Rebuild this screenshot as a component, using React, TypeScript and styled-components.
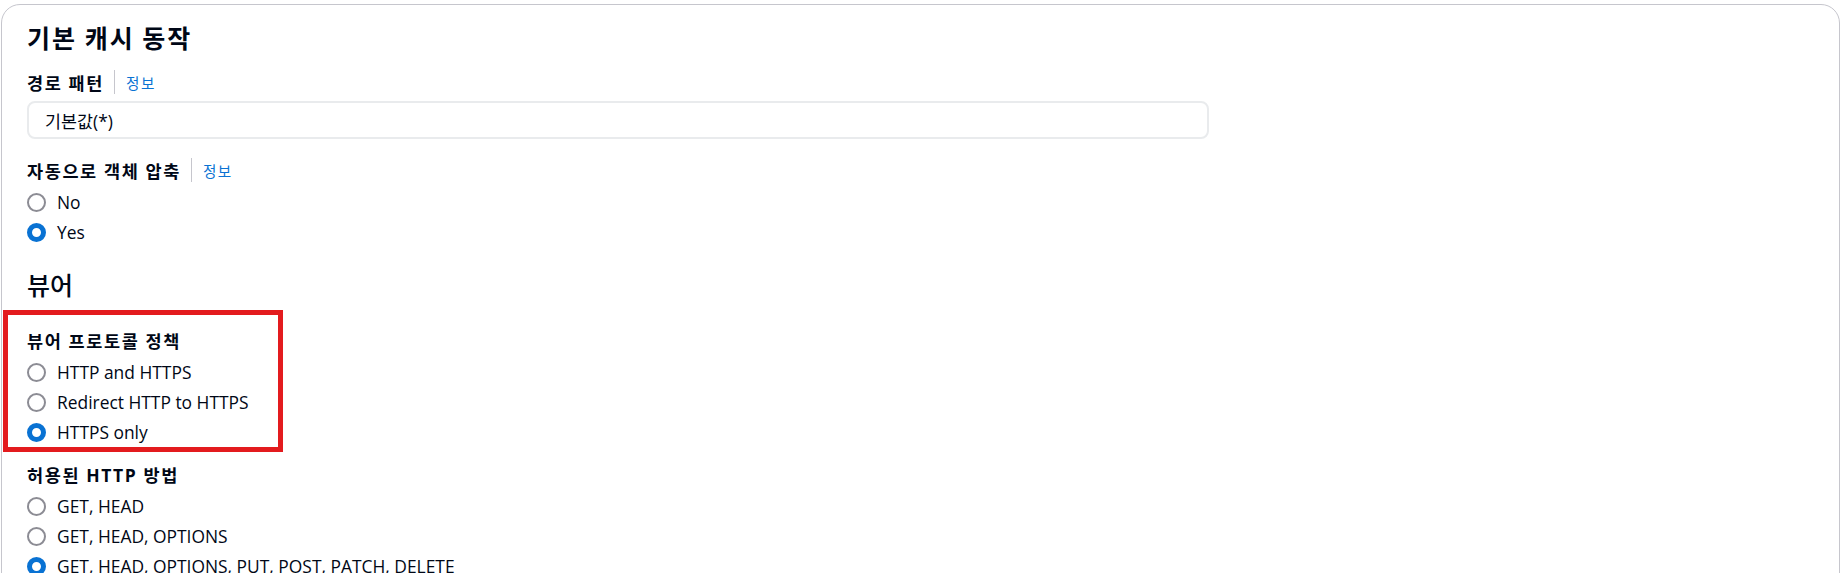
import React from "react";
import styled, { createGlobalStyle } from "styled-components";

const GlobalStyle = createGlobalStyle`
  html, body { margin: 0; padding: 0; background: #ffffff; }
  body {
    padding: 4px 5px 0 1px;
    font-family: "Open Sans", "Noto Sans CJK KR", sans-serif;
    color: #000716;
    overflow: hidden;
  }
  *, *::before, *::after { box-sizing: border-box; }
`;

const Card = styled.section`
  border: 1px solid #c6c6cd;
  border-radius: 19px;
  padding: 17px 24px 60px 25px;
  min-height: 640px;
  display: flex;
  flex-direction: column;
`;

const Title = styled.h2<{ $weight?: number; $mt?: number; $spacing?: number }>`
  margin: ${(p) => p.$mt ?? 0}px 0 0 0;
  font-family: "Noto Sans CJK KR", "Open Sans", sans-serif;
  font-size: 25px;
  line-height: 30px;
  font-weight: ${(p) => p.$weight ?? 700};
  letter-spacing: ${(p) => p.$spacing ?? 0}px;
`;

const Field = styled.div<{ $mt: number; $highlight?: boolean }>`
  position: relative;
  margin-top: ${(p) => p.$mt}px;
  display: flex;
  flex-direction: column;
  &::after {
    content: "";
    display: ${(p) => (p.$highlight ? "block" : "none")};
    position: absolute;
    top: -17px;
    left: -24px;
    width: 280px;
    height: 142px;
    border: 5px solid #e31b1e;
    pointer-events: none;
  }
`;

const LabelRow = styled.div`
  display: flex;
  align-items: center;
  height: 26px;
`;

const LabelText = styled.span`
  font-family: "Open Sans", "Noto Sans CJK KR", sans-serif;
  font-size: 17.5px;
  font-weight: 700;
  letter-spacing: 1.6px;
`;

const Divider = styled.span`
  width: 1px;
  height: 24px;
  background: #c6c6cd;
  margin: 0 11px 0 10px;
`;

const InfoLink = styled.a`
  font-family: "Noto Sans CJK KR", sans-serif;
  font-size: 14.6px;
  letter-spacing: 1.5px;
  color: #0972d3;
  text-decoration: none;
  cursor: pointer;
`;

const Input = styled.input`
  margin-top: 6px;
  width: 1182px;
  height: 38px;
  border: 2px solid #e9ebed;
  border-radius: 8px;
  padding: 0 16px;
  font-family: "Open Sans", "Noto Sans CJK KR", sans-serif;
  font-size: 17.4px;
  color: #000716;
  background: #ffffff;
  outline: none;
`;

const RadioGroup = styled.div`
  margin-top: 4px;
  display: flex;
  flex-direction: column;
`;

const RadioRow = styled.label`
  display: flex;
  align-items: center;
  height: 30px;
  gap: 11px;
  font-size: 17.4px;
  cursor: pointer;
`;

const RadioCircle = styled.span<{ $checked: boolean }>`
  flex: none;
  width: 19px;
  height: 19px;
  border-radius: 50%;
  background: #ffffff;
  border: ${(p) => (p.$checked ? "5.5px solid #0972d3" : "2px solid #8c8c94")};
`;

type Opt = { label: string; checked?: boolean };

const Radios = ({ options }: { options: Opt[] }) => (
  <RadioGroup>
    {options.map((o) => (
      <RadioRow key={o.label}>
        <RadioCircle $checked={!!o.checked} />
        <span>{o.label}</span>
      </RadioRow>
    ))}
  </RadioGroup>
);

const Label = ({ text, info }: { text: string; info?: boolean }) => (
  <LabelRow>
    <LabelText>{text}</LabelText>
    {info && (
      <>
        <Divider />
        <InfoLink>정보</InfoLink>
      </>
    )}
  </LabelRow>
);

export default function App() {
  return (
    <>
      <GlobalStyle />
      <Card>
        <Title $spacing={2}>기본 캐시 동작</Title>
        <Field $mt={17}>
          <Label text="경로 패턴" info />
          <Input readOnly value="기본값(*)" />
        </Field>
        <Field $mt={18}>
          <Label text="자동으로 객체 압축" info />
          <Radios options={[{ label: "No" }, { label: "Yes", checked: true }]} />
        </Field>
        <Title $weight={500} $mt={22}>뷰어</Title>
        <Field $mt={28} $highlight>
          <Label text="뷰어 프로토콜 정책" />
          <Radios
            options={[
              { label: "HTTP and HTTPS" },
              { label: "Redirect HTTP to HTTPS" },
              { label: "HTTPS only", checked: true },
            ]}
          />
        </Field>
        <Field $mt={14}>
          <Label text="허용된 HTTP 방법" />
          <Radios
            options={[
              { label: "GET, HEAD" },
              { label: "GET, HEAD, OPTIONS" },
              { label: "GET, HEAD, OPTIONS, PUT, POST, PATCH, DELETE", checked: true },
            ]}
          />
        </Field>
      </Card>
    </>
  );
}
